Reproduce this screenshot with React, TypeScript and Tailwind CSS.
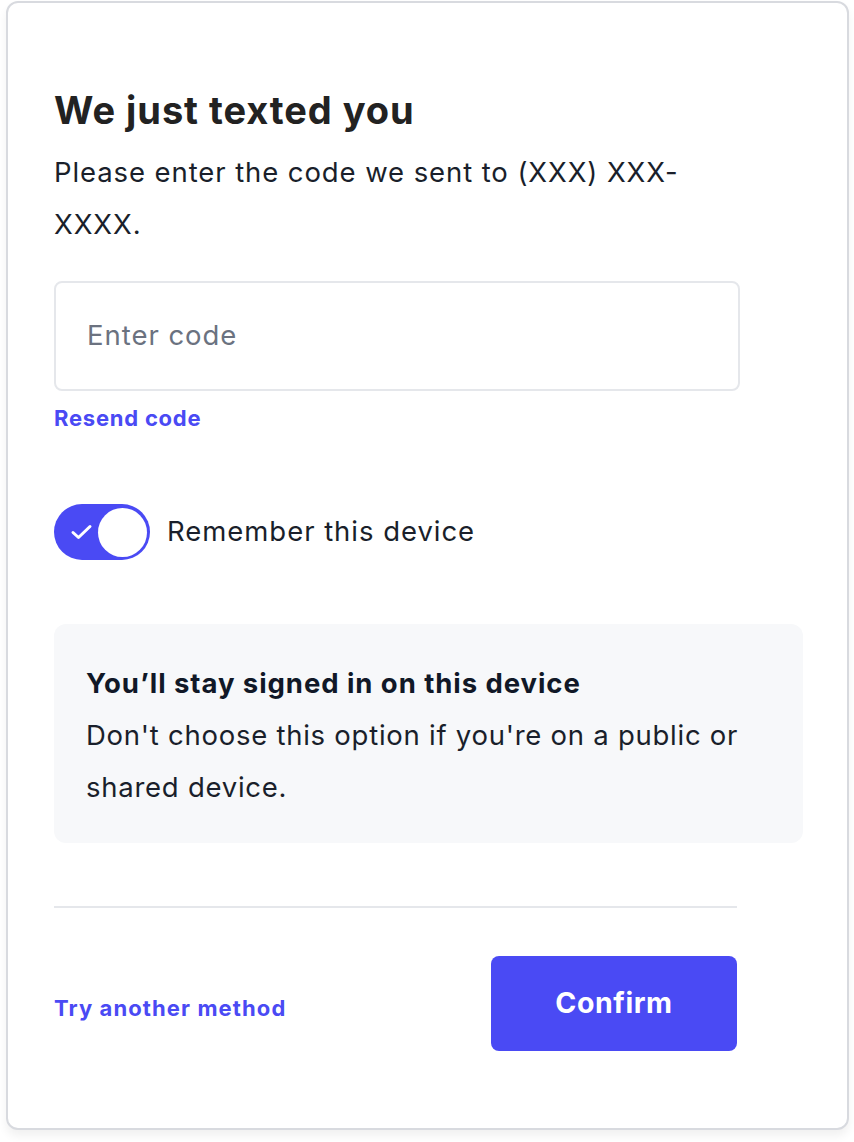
import React from "react";

export default function App() {
  const font = { fontFamily: "Inter, 'Noto Sans', sans-serif" };
  return (
    <div className="w-[854px] h-[1142px] bg-white pt-px pl-[6px]" style={font}>
      <div className="w-[843px] h-[1129px] rounded-[12px] border-2 border-[#d8dadf] bg-white shadow-[0_6px_10px_rgba(0,0,0,0.06)] pl-[46px] pt-[85px]">
        <h1 className="text-[38px] leading-[44px] font-bold text-[#222222] tracking-[0.025em]">We just texted you</h1>
        <p className="mt-[14px] w-[686px] text-[27.5px] leading-[52px] tracking-[0.033em] text-[#1a1f2b]">
          Please enter the code we sent to (XXX) XXX-XXXX.
        </p>
        <div className="mt-[31px] w-[686px] h-[110px] rounded-[8px] border-2 border-[#e5e7eb] flex items-center pl-[31px]">
          <span className="text-[27.5px] tracking-[0.035em] text-[#6b7280]">Enter code</span>
        </div>
        <div className="mt-[12px] text-[22px] leading-[30px] font-bold tracking-[0.035em] text-[#4a4af4]">Resend code</div>
        <div className="mt-[71px] flex items-center gap-[17px]">
          <div className="relative w-[96px] h-[56px] rounded-full bg-[#4a4af4]">
            <svg className="absolute left-[16px] top-[19px]" width="23" height="18" viewBox="0 0 23 18" fill="none">
              <path d="M3 9.5L8.5 14.5L20 3.5" stroke="white" strokeWidth="3" strokeLinecap="round" strokeLinejoin="round" />
            </svg>
            <div className="absolute right-[3px] top-[3.5px] w-[49px] h-[49px] rounded-full bg-white" />
          </div>
          <span className="text-[27.5px] tracking-[0.035em] text-[#1a1f2b]">Remember this device</span>
        </div>
        <div className="mt-[64px] w-[749px] rounded-[12px] bg-[#f7f8fa] px-[32px] pt-[33px] pb-[30px]">
          <div className="text-[27.5px] leading-[52px] font-bold tracking-[0.034em] text-[#111827]">You’ll stay signed in on this device</div>
          <div className="text-[27.5px] leading-[52px] tracking-[0.027em] text-[#1a1f2b]">
            Don't choose this option if you're on a public or shared device.
          </div>
        </div>
        <div className="mt-[63px] w-[683px] h-[2px] bg-[#e5e7eb]" />
        <div className="mt-[48px] w-[683px] flex items-center justify-between">
          <span className="mt-[9px] text-[22px] font-bold tracking-[0.05em] text-[#4a4af4]">Try another method</span>
          <button className="w-[246px] h-[95px] rounded-[8px] bg-[#4a4af4] text-white text-[28.5px] font-bold tracking-[0.02em]">Confirm</button>
        </div>
      </div>
    </div>
  );
}
